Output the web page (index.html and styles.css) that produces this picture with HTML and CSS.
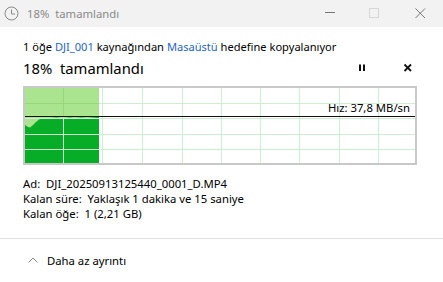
FILE: index.html
```html
<!DOCTYPE html>
<html lang="tr">
<head>
<meta charset="utf-8">
<link rel="stylesheet" href="styles.css">
</head>
<body>
<div class="window">
  <div class="titlebar">
    <svg class="title-icon" width="16" height="16" viewBox="0 0 16 16">
      <circle cx="7.5" cy="7.5" r="6.5" fill="none" stroke="#8a8a8a" stroke-width="1"/>
      <path d="M7.5 3.5 V8 H11" fill="none" stroke="#8a8a8a" stroke-width="1"/>
    </svg>
    <span class="title-text">18%&nbsp; tamamlandı</span>
    <div class="win-controls">
      <svg class="ctl ctl-min" width="46" height="27" viewBox="0 0 46 27"><path d="M18 12.5 H28" stroke="#777" stroke-width="1"/></svg>
      <svg class="ctl ctl-max" width="46" height="27" viewBox="0 0 46 27"><rect x="18.5" y="8.5" width="9" height="9" fill="none" stroke="#d6d6d6" stroke-width="1"/></svg>
      <svg class="ctl ctl-close" width="46" height="27" viewBox="0 0 46 27"><path d="M18.5 8.5 L28 18 M28 8.5 L18.5 18" stroke="#777" stroke-width="1"/></svg>
    </div>
  </div>

  <div class="content">
    <div class="subtitle">1 öğe <span class="link">DJI_001</span> kaynağından <span class="link">Masaüstü</span> hedefine kopyalanıyor</div>
    <div class="heading">
      <span class="heading-text">18%&nbsp; tamamlandı</span>
      <div class="actions">
        <svg class="act" width="10" height="10" viewBox="0 0 10 10"><rect x="1" y="1.5" width="2" height="6.5" fill="#111"/><rect x="5" y="1.5" width="2" height="6.5" fill="#111"/></svg>
        <svg class="act act-close" width="10" height="10" viewBox="0 0 10 10"><path d="M1.5 1.5 L8 8 M8 1.5 L1.5 8" stroke="#111" stroke-width="1.8"/></svg>
      </div>
    </div>

    <div class="graph">
      <svg width="390" height="75" viewBox="0 0 390 75">
        <rect x="0" y="0" width="74" height="75" fill="#abe48f"/>
        <polygon points="0,75 0,37 3,39 5,39.5 8,37 11,34 14,31.5 17,30.5 22,30.5 26,30 32,29.5 38,30.5 44,29.5 50,30 56,29.5 62,30 68,29.5 72,29 74,28.5 74,75" fill="#07ad27"/>
        <g stroke="#cdeed3" stroke-width="1">
          <path d="M0 15.5 H390 M0 30.5 H390 M0 46.5 H390 M0 61.5 H390"/>
          <path d="M38.5 0 V75 M77.5 0 V75 M117.5 0 V75 M157.5 0 V75 M196.5 0 V75 M235.5 0 V75 M274.5 0 V75 M314.5 0 V75 M353.5 0 V75"/>
        </g>
        <g stroke="#95d97a" stroke-width="1">
          <path d="M0 15.5 H74 M38.5 0 V28"/>
        </g>
        <path d="M0 28.5 H390" stroke="#111" stroke-width="1.2"/>
      </svg>
      <span class="speed">Hız: 37,8 MB/sn</span>
    </div>

    <div class="details">
      <div>Ad:&nbsp; DJI_20250913125440_0001_D.MP4</div>
      <div>Kalan süre:&nbsp; Yaklaşık 1 dakika ve 15 saniye</div>
      <div>Kalan öğe:&nbsp; 1 (2,21 GB)</div>
    </div>
  </div>

  <div class="footer">
    <svg class="chev" width="10" height="6" viewBox="0 0 10 6"><path d="M0.5 5.5 L5 1 L9.5 5.5" fill="none" stroke="#888" stroke-width="1"/></svg>
    <span class="footer-text">Daha az ayrıntı</span>
  </div>
</div>
</body>
</html>
```

FILE: styles.css
```css
* { box-sizing: border-box; }
html, body { margin: 0; padding: 0; background: #fff; }
body {
  font-family: "Noto Sans", "Open Sans", sans-serif;
  color: #000;
  width: 443px;
  height: 282px;
  overflow: hidden;
}
.window { display: flex; flex-direction: column; height: 282px; }

.titlebar {
  height: 27px;
  background: #f2f2f2;
  display: flex;
  align-items: center;
  padding-left: 4px;
}
.title-text {
  margin-left: 7px;
  font-size: 11.3px;
  color: #8a8a8a;
}
.win-controls { margin-left: auto; display: flex; }
.ctl { display: block; }
.ctl-min { margin-right: -2px; }

.content { padding-left: 23px; }
.subtitle {
  margin-top: 12px;
  font-size: 11.1px;
  line-height: 16px;
}
.link { color: #1f66c6; }

.heading {
  display: flex;
  align-items: center;
  height: 20px;
  margin-top: 3px;
}
.heading-text { font-size: 14.8px; line-height: 20px; }
.actions { margin-left: auto; display: flex; align-items: center; margin-right: 30px; }
.act { display: block; }
.act-close { margin-left: 35px; }

.graph {
  position: relative;
  margin-top: 8px;
  width: 394px;
  height: 79px;
  border: 2px solid #c8c8c8;
}
.graph svg { display: block; }
.speed {
  position: absolute;
  right: 5px;
  top: 13px;
  font-size: 11.3px;
  line-height: 14px;
}

.details {
  margin-top: 11px;
  font-size: 11.3px;
  line-height: 15px;
}

.footer {
  margin-top: auto;
  border-top: 1px solid #e3e3e3;
  height: 44px;
  display: flex;
  align-items: center;
  padding-left: 28px;
  padding-bottom: 1px;
}
.chev { display: block; }
.footer-text { margin-left: 9px; font-size: 11.3px; }
```
